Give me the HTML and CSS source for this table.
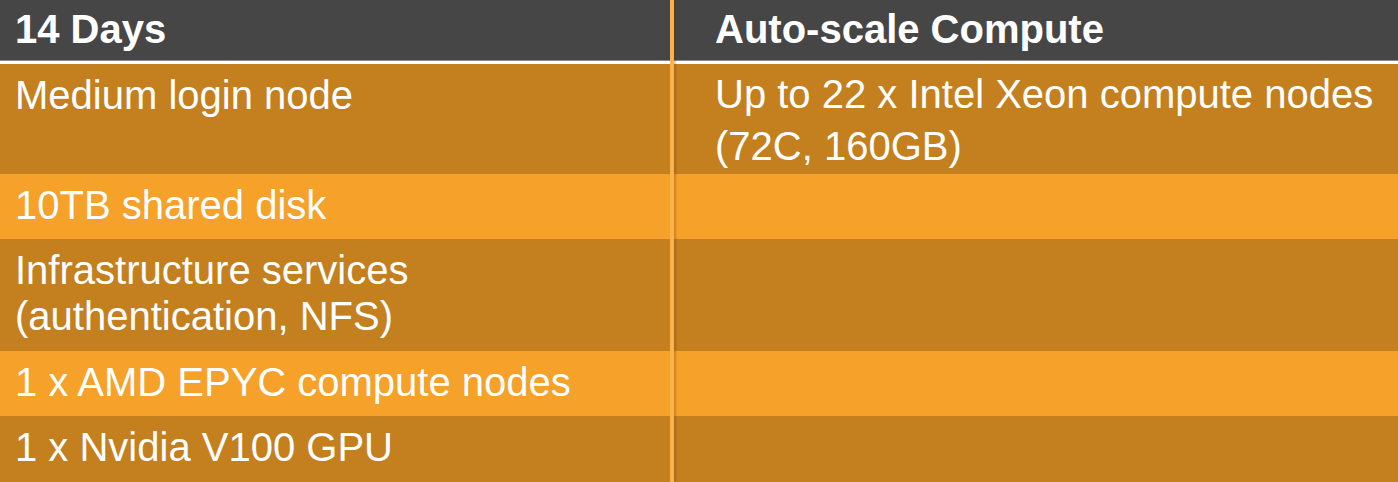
FILE: index.html
```html
<!DOCTYPE html>
<html lang="en">
<head>
<meta charset="utf-8">
<title>14 Days</title>
<link rel="stylesheet" href="styles.css">
</head>
<body>
<div class="table">
  <div class="row head">
    <div class="cell left">14 Days</div>
    <div class="cell right">Auto-scale Compute</div>
  </div>
  <div class="sep"></div>
  <div class="row dark r1">
    <div class="cell left">Medium login node</div>
    <div class="cell right tall">Up to 22 x Intel Xeon compute nodes<br>(72C, 160GB)</div>
  </div>
  <div class="row light r-single">
    <div class="cell left">10TB shared disk</div>
    <div class="cell right"></div>
  </div>
  <div class="row dark r3">
    <div class="cell left">Infrastructure services<br>(authentication, NFS)</div>
    <div class="cell right"></div>
  </div>
  <div class="row light r-single">
    <div class="cell left">1 x AMD EPYC compute nodes</div>
    <div class="cell right"></div>
  </div>
  <div class="row dark r-last">
    <div class="cell left">1 x Nvidia V100 GPU</div>
    <div class="cell right"></div>
  </div>
  <div class="divider"></div>
</div>
</body>
</html>
```

FILE: styles.css
```css
html, body {
  margin: 0;
  padding: 0;
  background: #c47f1e;
}
body {
  width: 1398px;
  height: 482px;
  overflow: hidden;
  font-family: "Liberation Sans", Arial, sans-serif;
  color: #ffffff;
}
.table {
  position: relative;
  display: flex;
  flex-direction: column;
  width: 1398px;
}
.row {
  display: grid;
  grid-template-columns: 670px 1fr;
  font-size: 40px;
  line-height: 46px;
}
.cell {
  padding-top: 8px;
  white-space: nowrap;
}
.cell.left {
  padding-left: 15px;
}
.cell.right {
  padding-left: 45px;
}
.head {
  height: 60px;
  background: #464646;
  font-weight: bold;
  border-bottom: 1px solid #8c8c8c;
}
.head .cell {
  padding-top: 6px;
}
.sep {
  height: 3px;
  background: #ffffff;
}
.dark {
  background: #c47f1e;
}
.light {
  background: #f5a12a;
}
.r1 {
  height: 110px;
}
.r1 .cell.tall {
  padding-top: 4px;
  line-height: 52px;
}
.r-single {
  height: 65px;
}
.r3 {
  height: 112px;
}
.r-last {
  height: 66px;
}
.divider {
  position: absolute;
  top: 0;
  bottom: 0;
  left: 670px;
  width: 4px;
  background: #fcb24a;
  box-shadow: 2px 0 2px rgba(90, 50, 0, 0.25);
}
```
